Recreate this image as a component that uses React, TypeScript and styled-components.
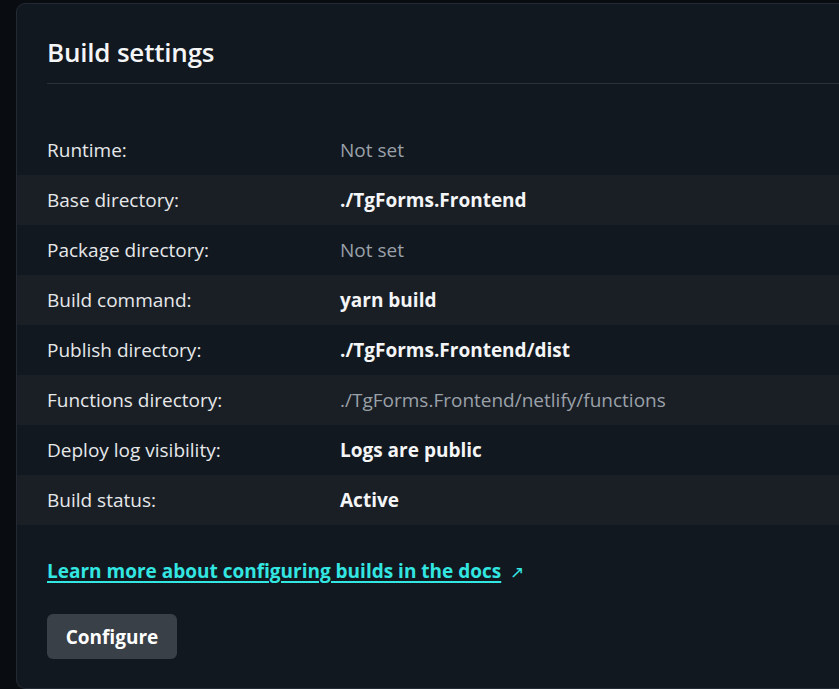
import React from "react";
import styled, { createGlobalStyle } from "styled-components";

const Global = createGlobalStyle`
  html, body { margin: 0; padding: 0; background: #090c10; }
  body { font-family: "Open Sans", "Noto Sans", sans-serif; color: #eef0f2; }
  * { box-sizing: border-box; }
`;

const Page = styled.div`
  padding: 3px 0 0 16px;
  height: 689px;
  overflow: hidden;
`;

const Card = styled.section`
  width: 840px;
  height: 686px;
  background: #121820;
  border: 1px solid #232a33;
  border-right: none;
  border-radius: 9px 0 0 9px;
  padding: 0 0 0 30px;
  display: flex;
  flex-direction: column;
`;

const Header = styled.div`
  padding-top: 30px;
  height: 80px;
  border-bottom: 1px solid #2a3139;
`;

const Title = styled.h2`
  margin: 0;
  font-size: 26px;
  font-weight: 600;
  line-height: 36px;
  color: #f4f5f6;
  letter-spacing: -0.2px;
`;

const Table = styled.div`
  margin: 41px 0 0 -30px;
  display: flex;
  flex-direction: column;
`;

const Row = styled.div<{ $striped?: boolean }>`
  display: grid;
  grid-template-columns: 293px 1fr;
  height: 50px;
  align-items: center;
  padding-left: 30px;
  background: ${(p) => (p.$striped ? "#1a1f26" : "transparent")};
`;

const Label = styled.span`
  font-size: 19px;
  color: #e6e8ea;
`;

const Value = styled.span<{ $muted?: boolean }>`
  font-size: 19px;
  font-weight: ${(p) => (p.$muted ? 400 : 700)};
  color: ${(p) => (p.$muted ? "#9aa1a9" : "#f4f5f6")};
`;

const LinkRow = styled.div`
  margin-top: 33px;
  display: flex;
  align-items: center;
  gap: 9px;
  color: #32e6e2;
`;

const DocLink = styled.a`
  color: #32e6e2;
  font-size: 19px;
  font-weight: 700;
  text-decoration: underline;
  text-underline-offset: 3px;
  text-decoration-thickness: 2px;
`;

const Arrow = styled.span`
  font-size: 17px;
`;

const Button = styled.button`
  margin-top: 30px;
  align-self: flex-start;
  width: 130px;
  height: 45px;
  border: none;
  border-radius: 6px;
  background: #3a4048;
  color: #ffffff;
  font-family: inherit;
  font-size: 19px;
  font-weight: 700;
`;

const rows: { label: string; value: string; muted?: boolean }[] = [
  { label: "Runtime:", value: "Not set", muted: true },
  { label: "Base directory:", value: "./TgForms.Frontend" },
  { label: "Package directory:", value: "Not set", muted: true },
  { label: "Build command:", value: "yarn build" },
  { label: "Publish directory:", value: "./TgForms.Frontend/dist" },
  { label: "Functions directory:", value: "./TgForms.Frontend/netlify/functions", muted: true },
  { label: "Deploy log visibility:", value: "Logs are public" },
  { label: "Build status:", value: "Active" },
];

export default function App() {
  return (
    <Page>
      <Global />
      <Card>
        <Header>
          <Title>Build settings</Title>
        </Header>
        <Table>
          {rows.map((r, i) => (
            <Row key={r.label} $striped={i % 2 === 1}>
              <Label>{r.label}</Label>
              <Value $muted={r.muted}>{r.value}</Value>
            </Row>
          ))}
        </Table>
        <LinkRow>
          <DocLink href="#">Learn more about configuring builds in the docs</DocLink>
          <Arrow>↗</Arrow>
        </LinkRow>
        <Button>Configure</Button>
      </Card>
    </Page>
  );
}
